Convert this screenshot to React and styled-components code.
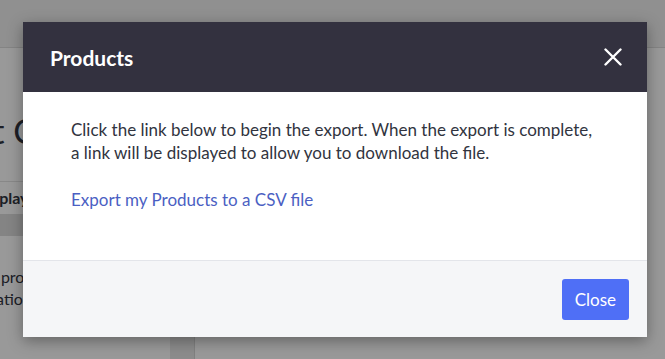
import React from "react";
import styled, { createGlobalStyle } from "styled-components";

const GlobalStyle = createGlobalStyle`
  html, body {
    margin: 0;
    padding: 0;
    width: 665px;
    height: 359px;
    overflow: hidden;
    font-family: "Source Sans Pro", Lato, "Noto Sans", sans-serif;
  }
`;

const Page = styled.div`
  position: relative;
  width: 665px;
  height: 359px;
  background: #f4f4f4;
  overflow: hidden;
  display: flex;
  flex-direction: column;
`;

const TopBar = styled.div`
  height: 47px;
  flex-shrink: 0;
  background: #f0f0f0;
  border-bottom: 1px solid #dcdcdc;
`;

const Main = styled.div`
  flex: 1;
  display: flex;
  background: #ffffff;
`;

const LeftPanel = styled.div`
  width: 170px;
  display: flex;
  flex-direction: column;
  color: #313440;
  overflow: hidden;
`;

const PageTitle = styled.h1`
  margin: 62px 0 0 -95px;
  font-size: 34px;
  font-weight: 400;
  white-space: nowrap;
`;

const TableHead = styled.div`
  margin: 30px 0 0 -30px;
  padding: 0 6px;
  height: 32px;
  line-height: 32px;
  font-weight: 700;
  font-size: 16px;
  white-space: nowrap;
  border-top: 1px solid #e3e3e3;
`;

const Band = styled.div`
  height: 22px;
  background: #dcdcdc;
`;

const Desc = styled.p`
  margin: 30px 0 0 -50px;
  font-size: 16px;
  line-height: 22px;
  white-space: nowrap;
`;

const Gutter = styled.div`
  width: 24px;
  background: #eaeaea;
  border-right: 1px solid #d8d8d8;
`;

const RightPanel = styled.div`
  flex: 1;
  background: #ffffff;
`;

const Overlay = styled.div`
  position: absolute;
  inset: 0;
  background: rgba(0, 0, 0, 0.4);
`;

const Modal = styled.div`
  position: absolute;
  left: 23px;
  top: 22px;
  width: 624px;
  display: flex;
  flex-direction: column;
  background: #ffffff;
  box-shadow: 0 4px 14px rgba(0, 0, 0, 0.35);
`;

const Header = styled.div`
  height: 70px;
  background: #33313f;
  display: flex;
  align-items: center;
  justify-content: space-between;
  padding: 0 22px 0 27px;
`;

const Title = styled.h2`
  margin: 0;
  color: #ffffff;
  font-size: 21px;
  font-weight: 700;
`;

const CloseIcon = styled.button`
  width: 24px;
  height: 24px;
  padding: 0;
  border: none;
  background: transparent;
  display: flex;
  align-items: center;
  justify-content: center;
  cursor: pointer;
`;

const Body = styled.div`
  padding: 26px 48px 49px;
  color: #313440;
  font-size: 17px;
  line-height: 23px;
`;

const Text = styled.p`
  margin: 0 0 24px;
`;

const ExportLink = styled.a`
  color: #4b5fc3;
  text-decoration: none;
  cursor: pointer;
`;

const Footer = styled.div`
  height: 76px;
  background: #f5f6f8;
  border-top: 1px solid #e3e5ea;
  display: flex;
  align-items: center;
  justify-content: flex-end;
  padding: 0 18px;
`;

const CloseButton = styled.button`
  height: 41px;
  padding: 0 13px;
  border: none;
  border-radius: 3px;
  background: #4f6ff6;
  color: #ffffff;
  font-family: inherit;
  font-size: 17px;
  cursor: pointer;
`;

export default function App() {
  return (
    <>
      <GlobalStyle />
      <Page>
        <TopBar />
        <Main>
          <LeftPanel>
            <PageTitle>Export Catalog</PageTitle>
            <TableHead>Display</TableHead>
            <Band />
            <Desc>
              Export products
              <br />
              information
            </Desc>
          </LeftPanel>
          <Gutter />
          <RightPanel />
        </Main>
        <Overlay />
        <Modal>
          <Header>
            <Title>Products</Title>
            <CloseIcon aria-label="Close">
              <svg width="18" height="18" viewBox="0 0 18 18">
                <path
                  d="M1.5 1.5 L16.5 16.5 M16.5 1.5 L1.5 16.5"
                  stroke="#ffffff"
                  strokeWidth="2.4"
                  strokeLinecap="round"
                />
              </svg>
            </CloseIcon>
          </Header>
          <Body>
            <Text>
              Click the link below to begin the export. When the export is complete,
              <br />
              a link will be displayed to allow you to download the file.
            </Text>
            <ExportLink>Export my Products to a CSV file</ExportLink>
          </Body>
          <Footer>
            <CloseButton>Close</CloseButton>
          </Footer>
        </Modal>
      </Page>
    </>
  );
}
